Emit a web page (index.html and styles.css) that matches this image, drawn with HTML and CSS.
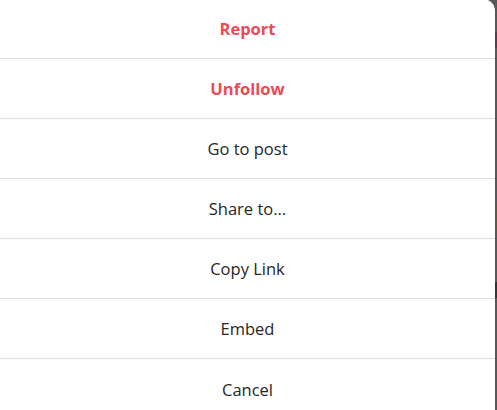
FILE: index.html
```html
<!DOCTYPE html>
<html lang="en">
<head>
    <meta charset="UTF-8">
    <meta name="viewport" content="width=device-width, initial-scale=1.0">
    <title>Post options</title>
    <link rel="stylesheet" href="styles.css">
</head>
<body>
    <div class="dialog">
        <button class="option danger">Report</button>
        <button class="option danger">Unfollow</button>
        <button class="option">Go to post</button>
        <button class="option">Share to...</button>
        <button class="option">Copy Link</button>
        <button class="option">Embed</button>
        <button class="option">Cancel</button>
    </div>
</body>
</html>
```

FILE: styles.css
```css
body {
    margin: 0;
    height: 410px;
    overflow: hidden;
    font-family: "Open Sans", "Noto Sans", sans-serif;
    background: linear-gradient(to bottom,
        #575757 0, #575757 32px,
        #5a3a4c 32px, #5a3a4c 48px,
        #575757 48px, #575757 205px,
        #5d5a3a 205px, #5d5a3a 232px,
        #575757 232px, #575757 282px,
        #333333 282px, #333333 298px,
        #575757 298px);
}
.dialog {
    width: 495px;
    margin-top: -1px;
    background-color: white;
    border-radius: 2px 12px 0 0;
    display: flex;
    flex-direction: column;
}
.option {
    height: 60px;
    padding: 0;
    border: none;
    border-bottom: 1px solid #dbdbdb;
    background: none;
    font-family: inherit;
    font-size: 16.5px;
    color: #262626;
    cursor: pointer;
}
.option:last-child {
    border-bottom: none;
}
.danger {
    color: #ed4956;
    font-weight: 700;
}
```
